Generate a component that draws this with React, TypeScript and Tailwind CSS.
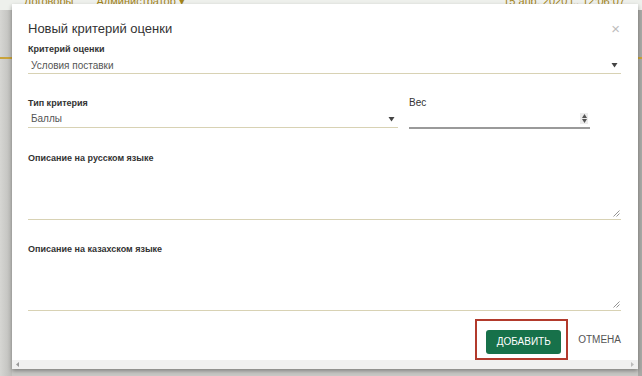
import React from "react";

const font = { fontFamily: '"Liberation Sans", Arial, sans-serif' };

function Arrow() {
  return (
    <svg width="7" height="6" viewBox="0 0 7 6" className="shrink-0">
      <path d="M0.5 1 L6.5 1 L3.5 5.5 Z" fill="#444" />
    </svg>
  );
}

function Grip() {
  return (
    <svg width="8" height="8" viewBox="0 0 8 8" className="absolute right-[1px] bottom-[2px]">
      <path d="M7.5 1.5 L1.5 7.5 M7.5 4.5 L4.5 7.5" stroke="#888" strokeWidth="0.9" />
    </svg>
  );
}

export default function App() {
  return (
    <div className="relative w-[642px] h-[376px] overflow-hidden bg-[#c8c8c5]" style={font}>
      {/* background page */}
      <div className="flex flex-col h-full">
        <div className="h-[10px] bg-[#eef0ec] relative overflow-hidden text-[11px] leading-[13px] text-[#a3841a]">
          <div className="flex w-full items-end absolute left-0 right-0 top-[-5px]">
            <span className="ml-[24px]">Договоры</span>
            <span className="ml-[23px]">Администратор ▾</span>
            <span className="ml-auto mr-[17px]">15 апр. 2020 г., 12:06:07</span>
          </div>
        </div>
        <div className="flex-1 flex">
          <div className="w-[12px] bg-gradient-to-r from-[#d6d6d3] to-[#bdbdba] flex flex-col">
            <div className="h-[47px]" />
            <div className="h-[2px] bg-[#c9a33a]" />
          </div>
          <div className="flex-1" />
          <div className="w-[4px] bg-[#a9a9a6] flex flex-col">
            <div className="h-[47px]" />
            <div className="h-[2px] bg-[#c9a33a]" />
          </div>
        </div>
      </div>

      {/* modal */}
      <div className="absolute left-[12px] top-[4px] w-[626px] h-[365px] bg-white flex flex-col shadow-[0_2px_4px_rgba(0,0,0,0.35)]">
        <div className="flex-1 relative pl-[16px] pr-[17px] pt-[17px] text-[#333]">
          <button className="absolute right-[18px] top-[17px] text-[#bdbdbd] text-[15px] leading-[15px]">×</button>
          <div className="text-[13px] leading-[16px] text-[#333]">Новый критерий оценки</div>

          <div className="mt-[6px] text-[9px] leading-[12px] font-bold text-[#333]">Критерий оценки</div>
          <div className="h-[19px] border-b border-[#d8d2b4] flex items-center justify-between pl-[3px] pr-[3px] pt-[2px]">
            <span className="text-[10px] text-[#555]">Условия поставки</span>
            <Arrow />
          </div>

          <div className="mt-[23px] flex gap-[11px]">
            <div className="w-[370px]">
              <div className="text-[9px] leading-[12px] font-bold text-[#333]">Тип критерия</div>
              <div className="h-[19px] border-b border-[#d8d2b4] flex items-center justify-between pl-[3px] pr-[3px] pt-[1px]">
                <span className="text-[10px] text-[#555]">Баллы</span>
                <Arrow />
              </div>
            </div>
            <div className="w-[181px]">
              <div className="text-[10px] leading-[12px] text-[#333]">Вес</div>
              <div className="h-[20px] border-b-2 border-[#9a9a9a] flex items-center justify-end pr-[2px]">
                <div className="w-[8px] h-[11px] bg-[#ececec] flex flex-col items-center justify-center gap-[1px]">
                  <svg width="5" height="4" viewBox="0 0 5 4"><path d="M0 4 L5 4 L2.5 0 Z" fill="#555" /></svg>
                  <svg width="5" height="4" viewBox="0 0 5 4"><path d="M0 0 L5 0 L2.5 4 Z" fill="#555" /></svg>
                </div>
              </div>
            </div>
          </div>

          <div className="mt-[23px] text-[9px] leading-[12px] font-bold text-[#333]">Описание на русском языке</div>
          <div className="relative h-[56px] border-b border-[#d8d2b4]">
            <Grip />
          </div>

          <div className="mt-[23px] text-[9px] leading-[12px] font-bold text-[#333]">Описание на казахском языке</div>
          <div className="relative h-[56px] border-b border-[#d8d2b4]">
            <Grip />
          </div>

          <div className="mt-[8px] flex items-center justify-end">
            <div className="border-2 border-[#b23a2c] pl-[9px] pt-[7px] pb-[4px] pr-[5px]">
              <button className="w-[75px] h-[24px] rounded-[3px] bg-[#17714a] text-white text-[10px] leading-[24px]">ДОБАВИТЬ</button>
            </div>
            <button className="ml-[10px] text-[10px] text-[#555]">ОТМЕНА</button>
          </div>
        </div>

        {/* scrollbar */}
        <div className="h-[12px] bg-[#f0f0f0] flex items-center justify-between px-[4px]">
          <svg width="3" height="5" viewBox="0 0 3 5"><path d="M3 0 L3 5 L0 2.5 Z" fill="#999" /></svg>
          <svg width="3" height="5" viewBox="0 0 3 5"><path d="M0 0 L0 5 L3 2.5 Z" fill="#bbb" /></svg>
        </div>
      </div>
    </div>
  );
}
